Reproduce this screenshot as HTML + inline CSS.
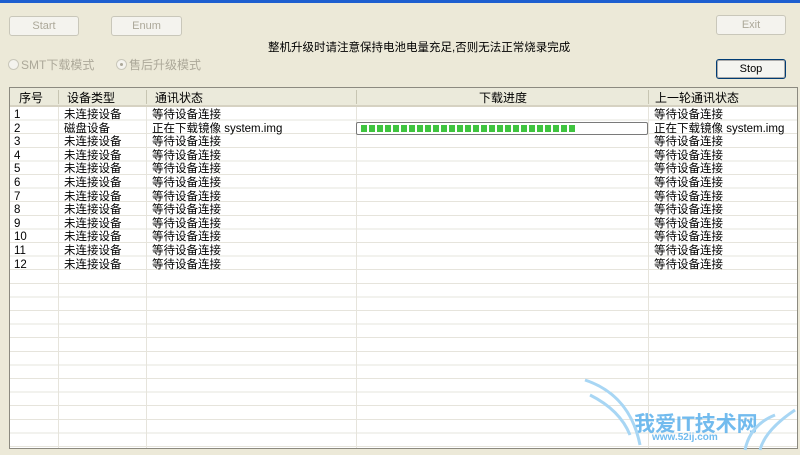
<!DOCTYPE html><html><head><meta charset="utf-8"><style>
*{margin:0;padding:0;box-sizing:border-box}
body{width:800px;height:454px;background:#ece9d8;position:relative;overflow:hidden;font-family:"Liberation Sans","Noto Sans CJK SC",sans-serif;font-size:11px;color:#000}
.top{position:absolute;left:0;top:0;width:800px;height:3px;background:#1d5fd0}
.btn{position:absolute;border:1px solid #c9c7ba;border-radius:3px;background:#f4f3ee;color:#aca899;text-align:center;font-size:11px;line-height:19px}
.msg{position:absolute;left:268px;top:39px;font-size:11.5px}
.radio{position:absolute;top:56px;color:#aca899;font-size:12px}
.radio i{display:inline-block;width:11px;height:11px;border:1px solid #c9c7ba;border-radius:50%;vertical-align:-1px;margin-right:2px;background:#f4f3ee;position:relative}
.list{position:absolute;left:9px;top:87px;width:789px;height:362px;border:1px solid #8c8a80;background:#fff;overflow:hidden}
.hdr{position:absolute;left:0;top:0;width:100%;height:19px;background:#ebeadb;border-bottom:2px solid #d6d2c2;font-size:12px}
.hdr span{position:absolute;top:1px}
.hdr b{position:absolute;top:2px;width:1px;height:14px;background:#c7c5b2}
.grid{position:absolute;left:0;top:19px;width:100%;bottom:0;background:repeating-linear-gradient(to bottom,transparent 0,transparent 12.6px,#e6e4dc 12.6px,#e6e4dc 13.6px)}
.v{position:absolute;top:19px;bottom:0;width:1px;background:#e6e4dc}
.row{position:absolute;left:0;width:100%;height:13.6px;font-size:11.5px;line-height:13px}
.row span{position:absolute;top:2px}
</style></head><body>
<div class="top"></div>
<div class="btn" style="left:9px;top:16px;width:70px;height:20px">Start</div>
<div class="btn" style="left:111px;top:16px;width:71px;height:20px">Enum</div>
<div class="btn" style="left:716px;top:15px;width:70px;height:20px">Exit</div>
<div class="btn" style="left:716px;top:59px;width:70px;height:20px;border:1px solid #003c74;color:#000;background:#f4f4f0;box-shadow:inset 0 0 0 1px #aaa;line-height:18px">Stop</div>
<div class="msg">整机升级时请注意保持电池电量充足,否则无法正常烧录完成</div>
<div class="radio" style="left:8px"><i></i>SMT下载模式</div>
<div class="radio" style="left:116px"><i><span style="position:absolute;left:3px;top:3px;width:3px;height:3px;background:#aca899;border-radius:50%"></span></i>售后升级模式</div>
<div class="list">
<div class="grid"></div>
<div class="v" style="left:48px"></div><div class="v" style="left:136px"></div><div class="v" style="left:346px"></div><div class="v" style="left:638px"></div>
<div class="hdr"><span style="left:9px">序号</span><span style="left:57px">设备类型</span><span style="left:145px">通讯状态</span><span style="left:469px">下载进度</span><span style="left:645px">上一轮通讯状态</span>
<b style="left:48px"></b><b style="left:136px"></b><b style="left:346px"></b><b style="left:638px"></b></div>
</div>
<div id="r" style="position:absolute;left:10px;top:107px;width:787px">
<div class="row" style="top:0"><span style="left:4px">1</span><span style="left:54px">未连接设备</span><span style="left:142px">等待设备连接</span><span style="left:644px">等待设备连接</span></div>
<div class="row" style="top:13.6px"><span style="left:4px">2</span><span style="left:54px">磁盘设备</span><span style="left:142px">正在下载镜像 system.img</span><span style="left:644px">正在下载镜像 system.img</span>
<div style="position:absolute;left:346px;top:1px;width:292px;height:13px;border:1px solid #7a7a7a;border-radius:2px;background:#fff"><div style="position:absolute;left:4px;top:2px;width:216px;height:7px;background:repeating-linear-gradient(to right,#3fc43f 0,#3fc43f 6px,#fff 6px,#fff 8px)"></div></div></div>
<div class="row" style="top:27.2px"><span style="left:4px">3</span><span style="left:54px">未连接设备</span><span style="left:142px">等待设备连接</span><span style="left:644px">等待设备连接</span></div>
<div class="row" style="top:40.8px"><span style="left:4px">4</span><span style="left:54px">未连接设备</span><span style="left:142px">等待设备连接</span><span style="left:644px">等待设备连接</span></div>
<div class="row" style="top:54.4px"><span style="left:4px">5</span><span style="left:54px">未连接设备</span><span style="left:142px">等待设备连接</span><span style="left:644px">等待设备连接</span></div>
<div class="row" style="top:68px"><span style="left:4px">6</span><span style="left:54px">未连接设备</span><span style="left:142px">等待设备连接</span><span style="left:644px">等待设备连接</span></div>
<div class="row" style="top:81.6px"><span style="left:4px">7</span><span style="left:54px">未连接设备</span><span style="left:142px">等待设备连接</span><span style="left:644px">等待设备连接</span></div>
<div class="row" style="top:95.2px"><span style="left:4px">8</span><span style="left:54px">未连接设备</span><span style="left:142px">等待设备连接</span><span style="left:644px">等待设备连接</span></div>
<div class="row" style="top:108.8px"><span style="left:4px">9</span><span style="left:54px">未连接设备</span><span style="left:142px">等待设备连接</span><span style="left:644px">等待设备连接</span></div>
<div class="row" style="top:122.4px"><span style="left:4px">10</span><span style="left:54px">未连接设备</span><span style="left:142px">等待设备连接</span><span style="left:644px">等待设备连接</span></div>
<div class="row" style="top:136px"><span style="left:4px">11</span><span style="left:54px">未连接设备</span><span style="left:142px">等待设备连接</span><span style="left:644px">等待设备连接</span></div>
<div class="row" style="top:149.6px"><span style="left:4px">12</span><span style="left:54px">未连接设备</span><span style="left:142px">等待设备连接</span><span style="left:644px">等待设备连接</span></div>
</div>
<div style="position:absolute;left:634px;top:408px;color:#5ab0ec;font-size:21px;font-weight:bold;opacity:.85">我爱IT技术网</div>
<div style="position:absolute;left:652px;top:432px;color:#5ab0ec;font-size:10px;font-weight:bold;opacity:.85">www.52ij.com</div>
<svg style="position:absolute;left:580px;top:375px" width="220" height="80"><path d="M5 5 Q50 20 60 70 M10 20 Q40 35 50 60 M195 40 Q170 50 165 75 M215 35 Q185 55 180 75" stroke="#a8d6f4" stroke-width="3" fill="none"/></svg>
</body></html>
